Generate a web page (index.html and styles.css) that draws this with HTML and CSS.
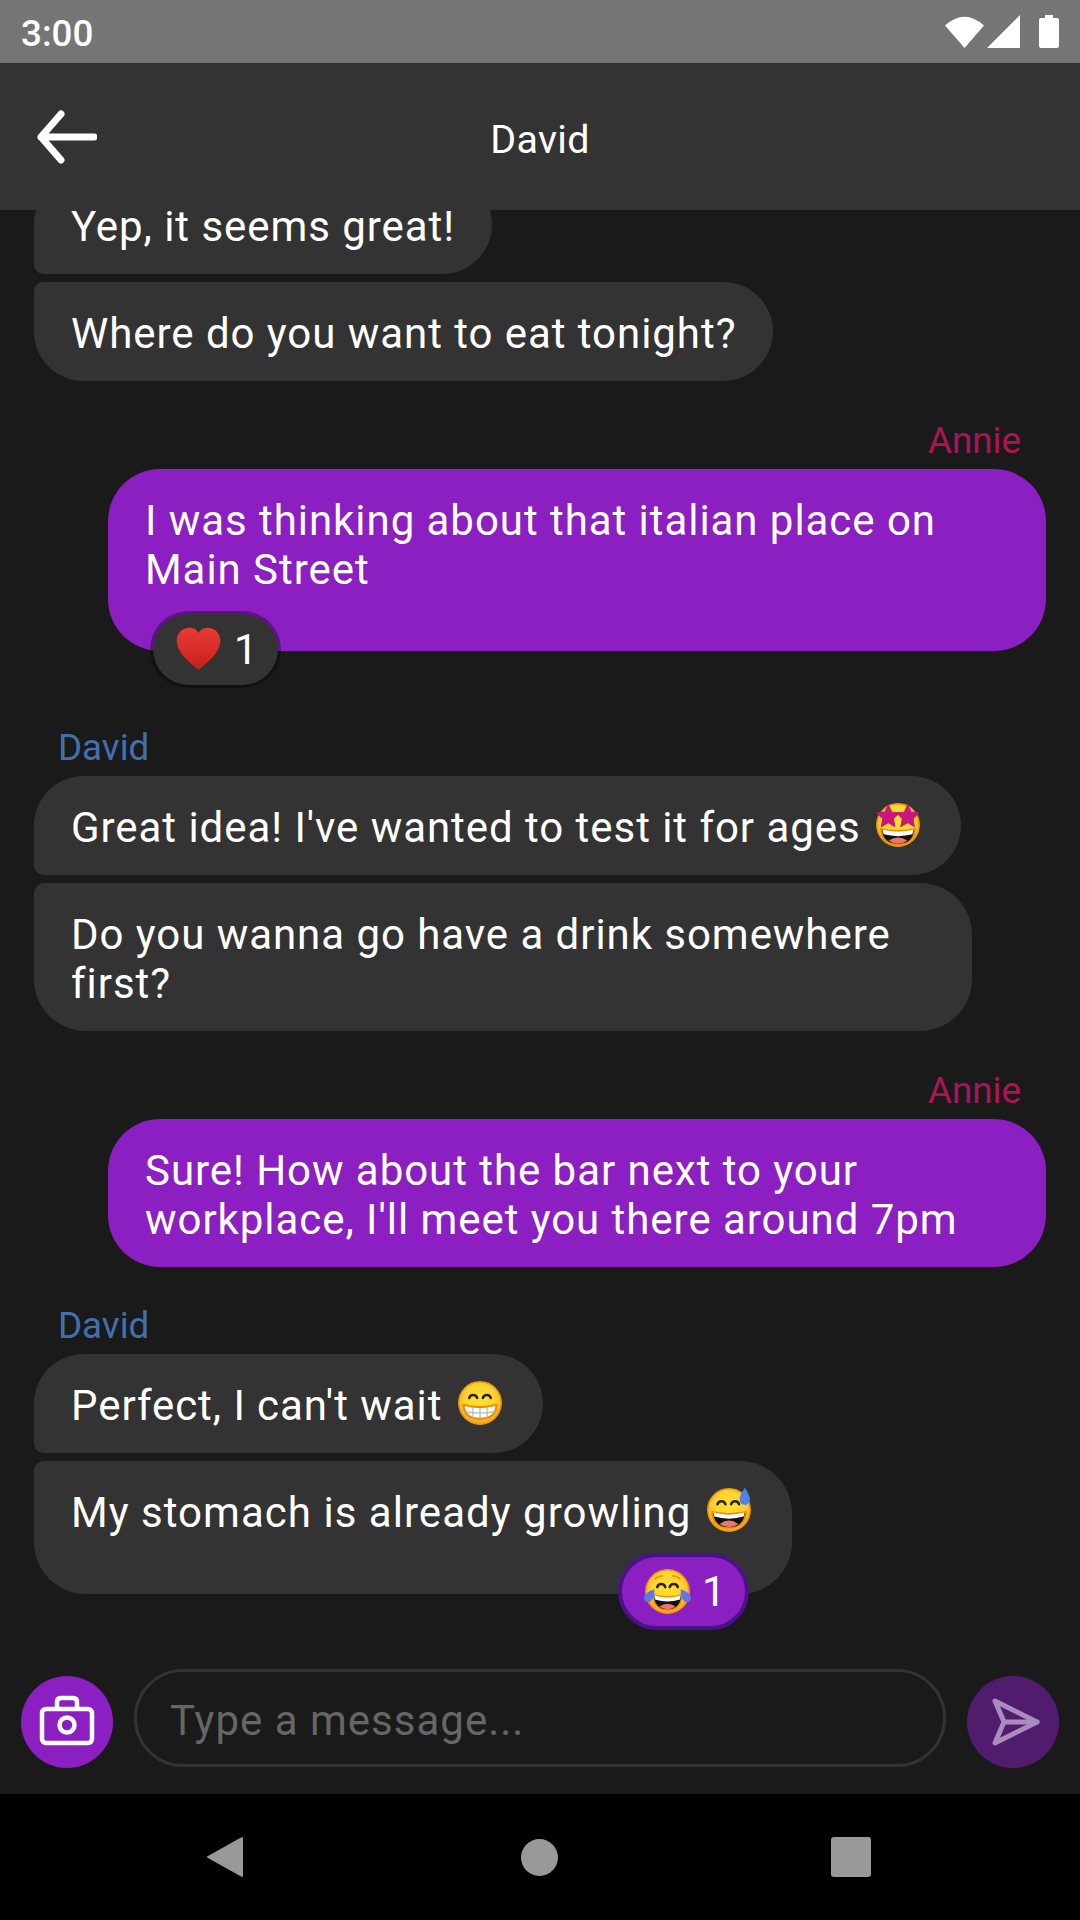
FILE: index.html
```html
<!DOCTYPE html>
<html lang="en">
<head>
<meta charset="utf-8">
<title>David</title>
<link rel="stylesheet" href="styles.css">
</head>
<body>
<svg class="defs" aria-hidden="true">
  <defs>
    <radialGradient id="face" cx="50%" cy="42%" r="58%">
      <stop offset="0%" stop-color="#ffe033"/>
      <stop offset="62%" stop-color="#fed32e"/>
      <stop offset="100%" stop-color="#f6a323"/>
    </radialGradient>
    <linearGradient id="heart" x1="0" y1="0" x2="0" y2="1">
      <stop offset="0%" stop-color="#e93a36"/>
      <stop offset="100%" stop-color="#c4211b"/>
    </linearGradient>
    <symbol id="e-base" viewBox="0 0 128 128">
      <circle cx="64" cy="64" r="59" fill="url(#face)" stroke="#ee9612" stroke-width="4"/>
    </symbol>
    <symbol id="e-star" viewBox="0 0 128 128">
      <use href="#e-base"/>
      <path d="M14 72Q64 84 114 72Q112 120 64 120Q16 120 14 72Z" fill="#eb8f00"/>
      <path d="M20 78Q64 88 108 78Q106 116 64 116Q22 116 20 78Z" fill="#111"/>
      <path d="M21 77Q64 87 107 77L104 90Q64 100 24 90Z" fill="#fff"/>
      <path d="M38 107Q64 90 90 107Q78 116 64 116Q50 116 38 107Z" fill="#ed7770"/>
      <path d="M37 8l9 20 21 3-16 15 4 22-18-11-19 11 4-22L6 31l22-3Z" fill="#c9177e" stroke="#c9177e" stroke-width="3" stroke-linejoin="round"/>
      <path d="M91 8l9 20 21 3-15 15 3 22-18-11-19 11 4-22-15-15 21-3Z" fill="#c9177e" stroke="#c9177e" stroke-width="3" stroke-linejoin="round"/>
    </symbol>
    <symbol id="e-grin" viewBox="0 0 128 128">
      <use href="#e-base"/>
      <path d="M34 50c3-11 19-11 22 0M72 50c3-11 19-11 22 0" fill="none" stroke="#2a2118" stroke-width="7" stroke-linecap="round"/>
      <path d="M18 69Q64 82 110 69Q108 108 64 108Q20 108 18 69Z" fill="#fff" stroke="#eb8f00" stroke-width="6" stroke-linejoin="round"/>
      <path d="M22 88Q64 96 106 88M44 76V106M64 78V108M84 76V106" fill="none" stroke="#b5b5b5" stroke-width="3"/>
    </symbol>
    <symbol id="e-sweat" viewBox="0 0 128 128">
      <use href="#e-base"/>
      <path d="M32 48c3-11 19-11 22 0M70 48c3-11 19-11 22 0" fill="none" stroke="#2a2118" stroke-width="7" stroke-linecap="round"/>
      <path d="M14 66Q64 78 114 66Q112 116 64 116Q16 116 14 66Z" fill="#eb8f00"/>
      <path d="M20 72Q64 84 108 72Q104 112 64 112Q24 112 20 72Z" fill="#111"/>
      <path d="M21 71Q64 83 107 71L105 82Q64 94 23 82Z" fill="#fff"/>
      <path d="M38 103Q64 84 90 103Q78 112 64 112Q50 112 38 103Z" fill="#ed7770"/>
      <path d="M108 2Q124 26 122 36A14 14 0 0 1 94 36Q92 26 108 2Z" fill="#4f83e8"/>
    </symbol>
    <symbol id="e-joy" viewBox="0 0 128 128">
      <use href="#e-base"/>
      <path d="M30 30Q40 20 50 22M98 30Q88 20 78 22" fill="none" stroke="#eb8f00" stroke-width="4" stroke-linecap="round"/>
      <path d="M36 52c3-11 19-11 22 0M70 52c3-11 19-11 22 0" fill="none" stroke="#2a2118" stroke-width="7" stroke-linecap="round"/>
      <path d="M22 70Q64 82 106 70Q104 116 64 116Q24 116 22 70Z" fill="#eb8f00"/>
      <path d="M27 76Q64 87 101 76Q98 112 64 112Q30 112 27 76Z" fill="#111"/>
      <path d="M28 75Q64 86 100 75L98 86Q64 96 30 86Z" fill="#fff"/>
      <path d="M42 105Q64 90 86 105Q76 112 64 112Q52 112 42 105Z" fill="#ed7770"/>
      <path d="M28 58Q4 66 0 80Q0 96 16 92Q30 84 28 58Z" fill="#5c77e8"/>
      <path d="M100 58Q124 66 128 80Q128 96 112 92Q98 84 100 58Z" fill="#5c77e8"/>
    </symbol>
    <symbol id="e-heart" viewBox="0 0 128 128">
      <path d="M64 122C30 94 2 72 2 38 2 16 20 2 38 2c12 0 22 6 26 16C68 8 78 2 90 2c18 0 36 14 36 36 0 34-28 56-62 84Z" fill="url(#heart)"/>
    </symbol>
  </defs>
</svg>

<div class="app">
  <div class="status">
    <span class="time">3:00</span>
    <div class="status-icons">
      <svg class="ic-wifi" viewBox="0 0 39 33"><path d="M0 10.5Q19.5-7 39 10.5L19.5 33Z" fill="#fff"/></svg>
      <svg class="ic-signal" viewBox="0 0 33 33"><path d="M33 0V33H0Z" fill="#fff"/></svg>
      <svg class="ic-battery" viewBox="0 0 20 33"><path d="M6 0H14V3H18Q20 3 20 5V31Q20 33 18 33H2Q0 33 0 31V5Q0 3 2 3H6Z" fill="#fff"/></svg>
    </div>
  </div>

  <header class="header">
    <svg class="back" viewBox="0 0 60 54"><path d="M57 27H4M24 4L4 27L24 50" fill="none" stroke="#fff" stroke-width="7" stroke-linecap="round" stroke-linejoin="round"/></svg>
    <span class="title">David</span>
  </header>

  <main class="messages">
    <section class="group">
      <div class="bubble tail-bottom">Yep, it seems great!</div>
      <div class="bubble tail-top">Where do you want to eat tonight?</div>
    </section>

    <section class="group mine reacted">
      <div class="name annie">Annie</div>
      <div class="bubble purple has-reaction">I was thinking about that italian place on Main Street
        <div class="reaction reaction-left"><svg class="emoji-heart"><use href="#e-heart"/></svg><span>1</span></div>
      </div>
    </section>

    <section class="group">
      <div class="name david">David</div>
      <div class="bubble tail-bottom">Great idea! I've wanted to test it for ages <svg class="emoji"><use href="#e-star"/></svg></div>
      <div class="bubble tail-top">Do you wanna go have a drink somewhere first?</div>
    </section>

    <section class="group mine">
      <div class="name annie">Annie</div>
      <div class="bubble purple">Sure! How about the bar next to your workplace, I'll meet you there around 7pm</div>
    </section>

    <section class="group">
      <div class="name david">David</div>
      <div class="bubble tail-bottom">Perfect, I can't wait <svg class="emoji"><use href="#e-grin"/></svg></div>
      <div class="bubble tail-top has-reaction wide">My stomach is already growling <svg class="emoji"><use href="#e-sweat"/></svg>
        <div class="reaction reaction-right"><svg class="emoji-react"><use href="#e-joy"/></svg><span>1</span></div>
      </div>
    </section>
  </main>

  <div class="composer">
    <button class="round camera" aria-label="Camera">
      <svg viewBox="0 0 92 92"><g fill="none" stroke="#fff" stroke-width="4.5" stroke-linejoin="round"><rect x="21" y="33" width="50" height="34" rx="4"/><path d="M36 33V26Q36 22 40 22H52Q56 22 56 26V33"/><circle cx="46" cy="49" r="7.5"/></g></svg>
    </button>
    <div class="input">Type a message...</div>
    <button class="round send" aria-label="Send">
      <svg viewBox="0 0 92 92"><g fill="none" stroke="#a98bbf" stroke-width="5" stroke-linejoin="round" stroke-linecap="round"><path d="M28 25L70 46L28 67L37 46Z"/><path d="M37 46H70"/></g></svg>
    </button>
  </div>

  <nav class="nav">
    <svg class="nav-back" viewBox="0 0 37 42"><path d="M35 2V40L1 21Z" fill="#999" stroke="#999" stroke-width="2" stroke-linejoin="round"/></svg>
    <span class="nav-home"></span>
    <span class="nav-recent"></span>
  </nav>
</div>
</body>
</html>
```

FILE: styles.css
```css
* { box-sizing: border-box; }

html, body {
  margin: 0;
  padding: 0;
  width: 1080px;
  height: 1920px;
  overflow: hidden;
  background: #1a1a1a;
  font-family: Roboto, "Noto Sans", sans-serif;
  color: #fff;
}

.defs { position: absolute; width: 0; height: 0; }

.app {
  width: 1080px;
  height: 1920px;
  display: flex;
  flex-direction: column;
}

/* Status bar */
.status {
  flex: none;
  height: 63px;
  background: #757575;
  display: flex;
  align-items: center;
  justify-content: space-between;
  padding: 0 21px;
}
.time { font-size: 36.75px; font-weight: 500; line-height: 59px; padding-top: 4px; }
.status-icons { display: flex; align-items: center; }
.ic-wifi { width: 39px; height: 33px; margin-right: 3px; }
.ic-signal { width: 33px; height: 33px; margin-right: 19px; }
.ic-battery { width: 20px; height: 33px; }

/* Header */
.header {
  flex: none;
  height: 147px;
  background: #333;
  display: flex;
  align-items: center;
  justify-content: center;
  position: relative;
  z-index: 1;
}
.back { position: absolute; left: 37px; top: 47px; width: 60px; height: 54px; }
.title { font-size: 39.4px; letter-spacing: 0.3px; padding-top: 5px; }

/* Messages */
.messages {
  flex: 1;
  min-height: 0;
  overflow: hidden;
  display: flex;
  flex-direction: column;
  justify-content: flex-end;
  padding: 0 34px 75px;
}
.group {
  flex: none;
  display: flex;
  flex-direction: column;
  align-items: flex-start;
  margin-top: 38px;
}
.group.mine { align-items: flex-end; margin-top: 39px; }
.group.reacted { margin-bottom: 38px; }

.name {
  font-size: 36.75px;
  line-height: 40px;
  padding-top: 1px;
  margin: 0 25px 8px 24px;
}
.annie { color: #ad1457; }
.david { color: #4270ad; }

.bubble {
  position: relative;
  width: fit-content;
  max-width: 938px;
  padding: 27px 37px 23px;
  border-radius: 52px;
  background: #333;
  font-size: 42px;
  line-height: 49px;
  letter-spacing: 0.95px;
  margin-bottom: 8px;
}
.bubble:last-child { margin-bottom: 0; }
.purple { background: #8b1fc1; }
.tail-bottom { border-bottom-left-radius: 10px; }
.tail-top { border-top-left-radius: 10px; }
.has-reaction { padding-bottom: 57px; }
.wide { letter-spacing: 1.03px; }

.emoji {
  width: 46px;
  height: 46px;
  vertical-align: 4px;
  margin: -10px 3px;
}

/* Reactions */
.reaction {
  position: absolute;
  display: flex;
  align-items: center;
  height: 77px;
  width: 131px;
  padding-left: 23px;
  border-radius: 39px;
  border: 3px solid rgba(0, 0, 0, 0.33);
  background: #333;
  background-clip: padding-box;
  font-size: 42px;
  line-height: 1;
  letter-spacing: 0;
}
.reaction span { margin-left: 13px; }
.reaction-left { left: 42px; bottom: -37px; }
.reaction-right {
  right: 43px;
  bottom: -36px;
  border: 4px solid #4a1288;
  background: #8b1fc1;
  padding-left: 22px;
}
.reaction-right span { margin-left: 11px; }
.emoji-heart { width: 45px; height: 45px; }
.emoji-react { width: 47px; height: 47px; }

/* Composer */
.composer {
  flex: none;
  display: flex;
  align-items: flex-end;
  padding: 0 21px 26px;
}
.round {
  flex: none;
  width: 92px;
  height: 92px;
  border: 0;
  padding: 0;
  border-radius: 50%;
  display: block;
}
.round svg { display: block; width: 92px; height: 92px; }
.camera { background: #8b1fc1; }
.send { background: #521c6e; }
.input {
  flex: 1;
  height: 98px;
  margin: 0 21px 1px;
  border: 3px solid #333;
  border-radius: 49px;
  padding: 4px 33px 0;
  display: flex;
  align-items: center;
  font-size: 42px;
  letter-spacing: 1px;
  color: #666;
}

/* Navigation */
.nav {
  flex: none;
  height: 126px;
  background: #000;
  display: flex;
  align-items: center;
  padding-left: 207px;
}
.nav-back { width: 37px; height: 42px; }
.nav-home {
  width: 37px;
  height: 37px;
  border-radius: 50%;
  background: #999;
  margin: 0 273px 0 277px;
}
.nav-recent {
  width: 40px;
  height: 40px;
  border-radius: 3px;
  background: #999;
}
```
